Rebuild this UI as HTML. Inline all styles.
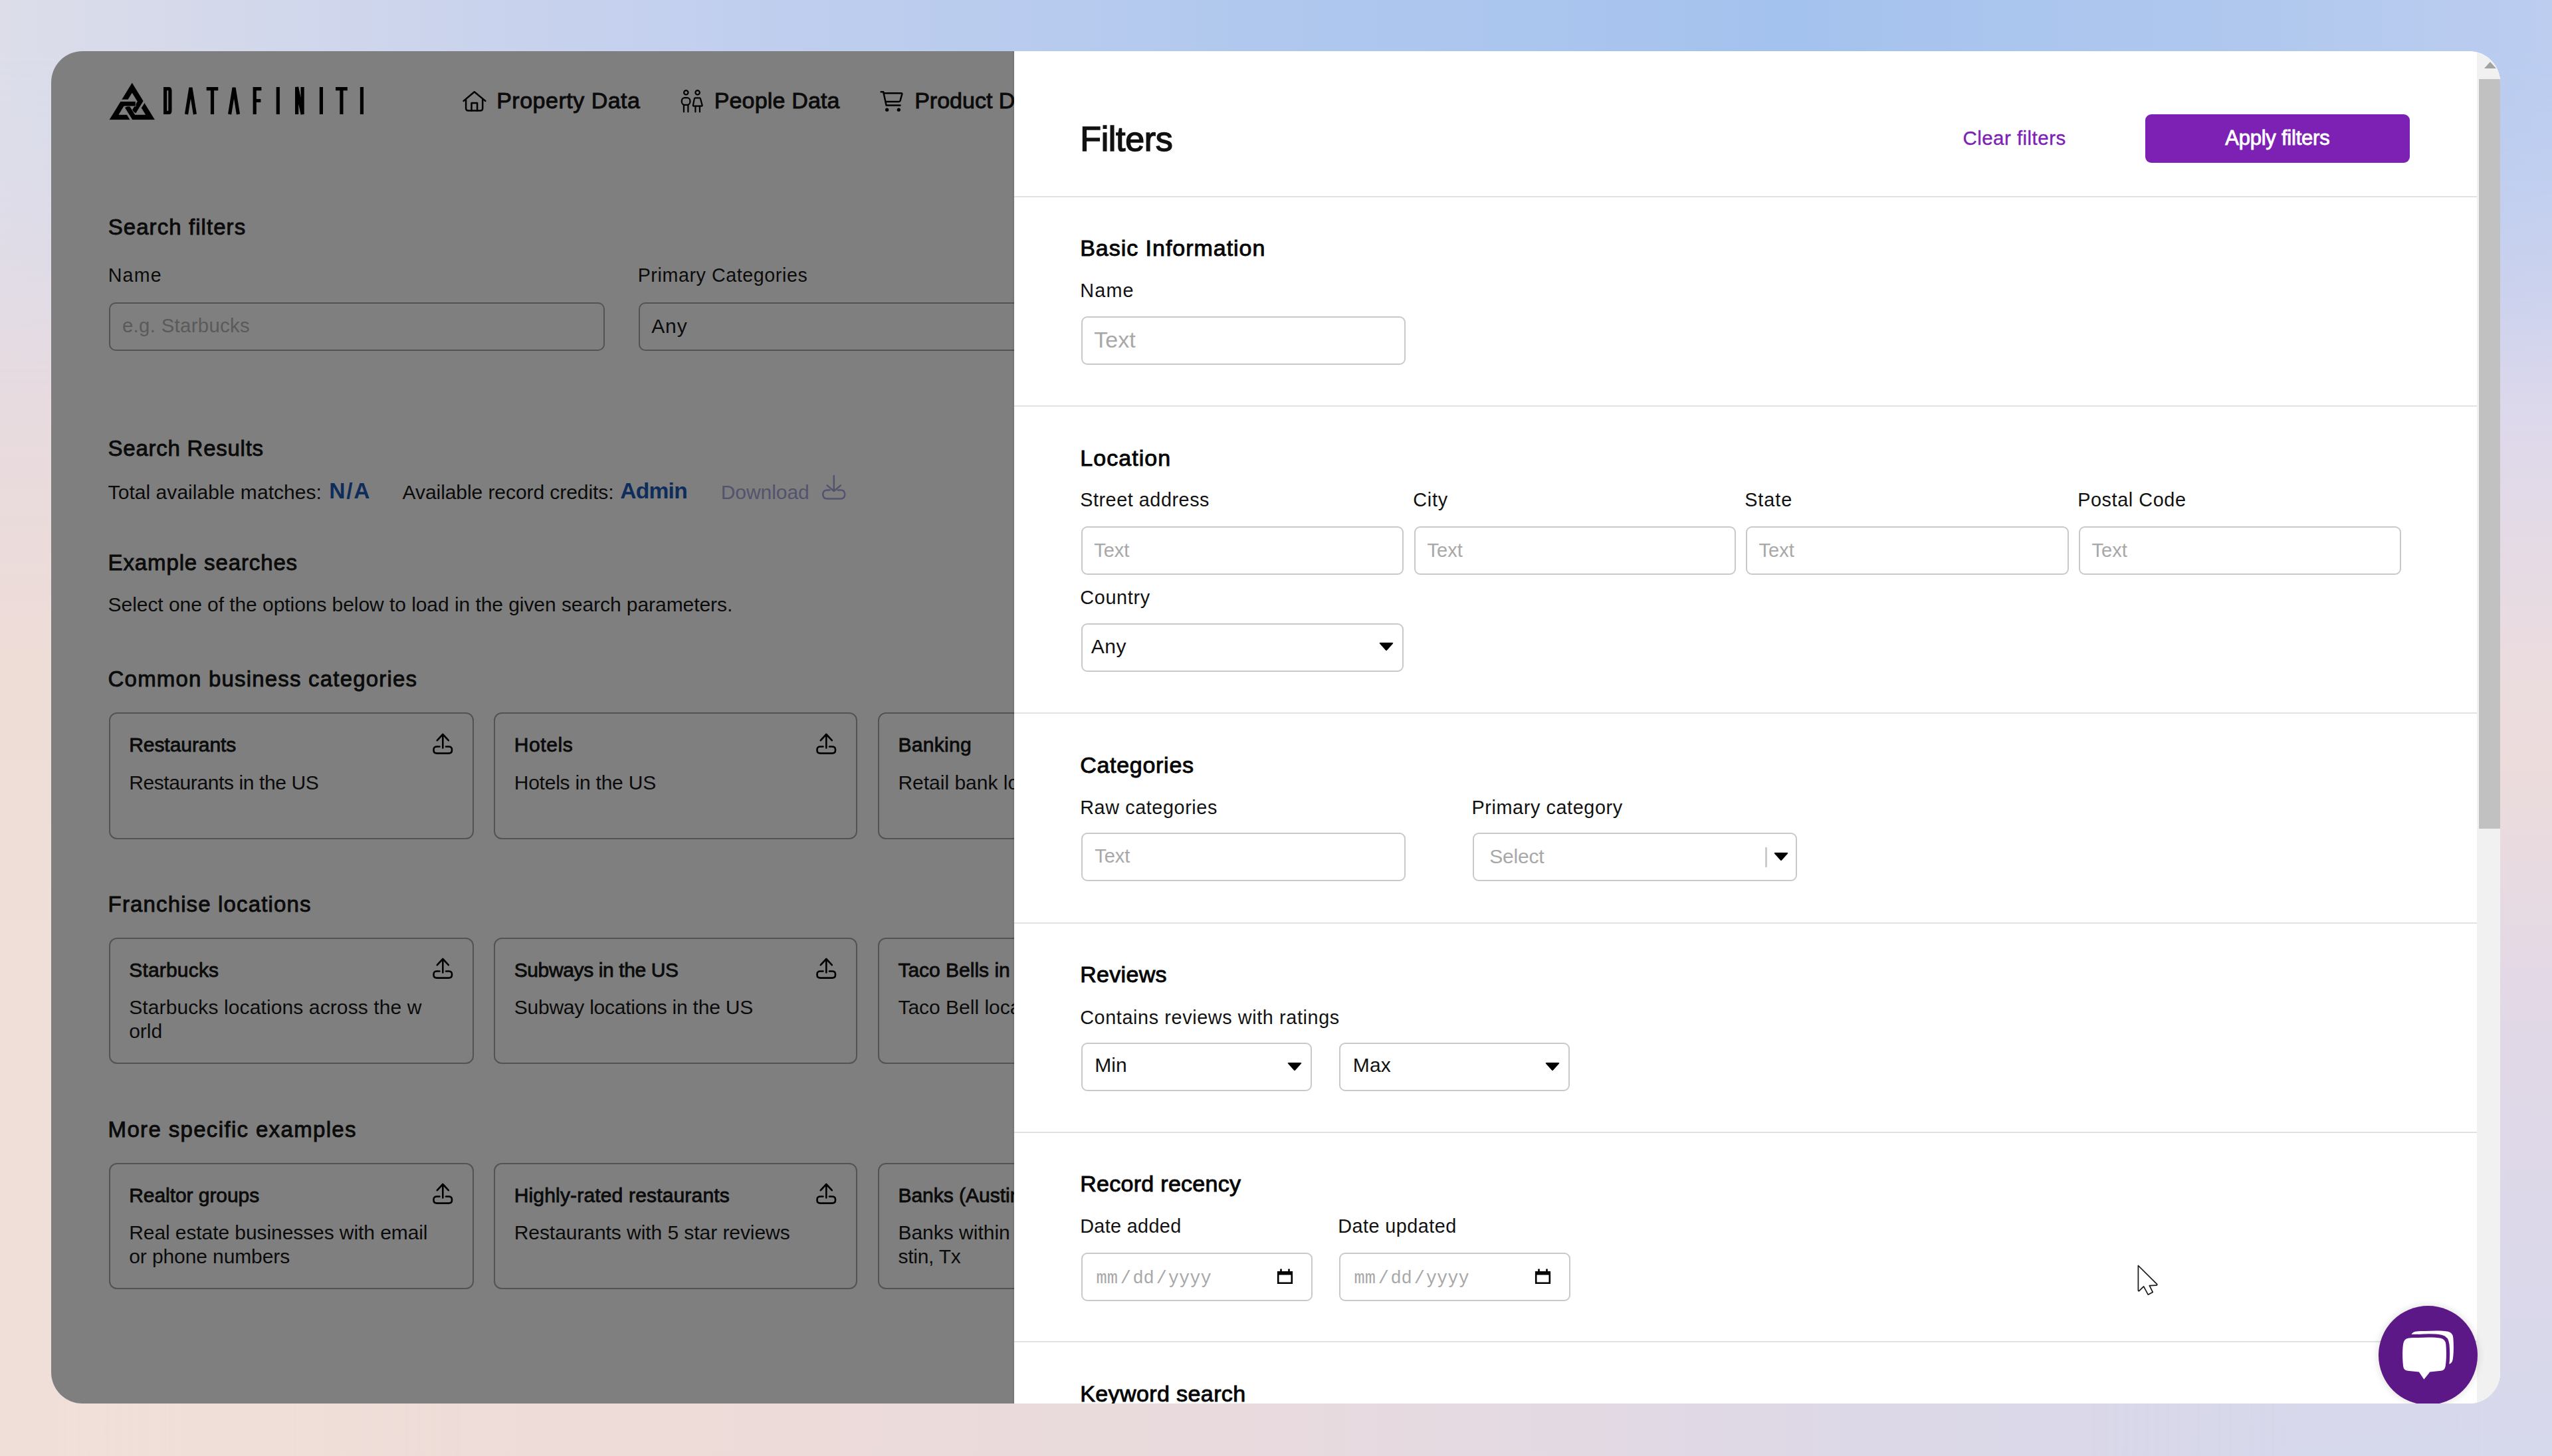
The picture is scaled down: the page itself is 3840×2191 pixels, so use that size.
<!DOCTYPE html>
<html><head><meta charset="utf-8">
<style>
*{margin:0;padding:0;box-sizing:border-box}
html,body{width:3840px;height:2191px;overflow:hidden}
body{position:relative;font-family:"Liberation Sans",sans-serif;color:#212121;background:linear-gradient(90deg,#f0dfd9 0%,#eedcd8 25%,#e8dade 50%,#dcd8e8 75%,#d4d8ec 100%)}
.bgl{position:absolute;left:0;top:0;width:3840px;height:2191px}
#bgL{background:linear-gradient(180deg,#d8dcec 0%,#e6dbe2 23%,#eedcd7 45%,#f0dfd8 70%,#f0dfd9 100%);-webkit-mask-image:linear-gradient(90deg,#000 0px,#000 80px,transparent 700px)}
#bgR{background:linear-gradient(180deg,#b8cbee 0%,#cdd3ee 13.7%,#dcd8ec 27.4%,#ebdcdf 45.6%,#ecdcdc 52.5%,#e2d8e6 68.5%,#d6d8ec 100%);-webkit-mask-image:linear-gradient(270deg,#000 0px,#000 80px,transparent 700px)}
#bgT{background:linear-gradient(90deg,#dcdde9 0%,#c4d0ee 25%,#b0c8ee 50%,#a4c2ee 70%,#b0c8ee 88%,#bccdf0 100%);-webkit-mask-image:linear-gradient(180deg,#000 0px,#000 80px,transparent 600px)}
.t{position:absolute;white-space:nowrap}
.b{position:absolute}
#card{position:absolute;left:0;top:0;width:3840px;height:2191px;clip-path:inset(77px 78px 79px 77px round 47px);}
#pg{position:absolute;left:0;top:0;width:3840px;height:2191px;background:#fff;color:#161616}
#ov{position:absolute;left:0;top:0;width:1526px;height:2191px;background:rgba(0,0,0,0.5)}
#panel{position:absolute;left:1526px;top:0;width:2314px;height:2191px;background:#fff}
#pc{position:absolute;left:-1526px;top:0;width:3840px;height:2191px}
</style></head><body>
<div class="bgl" id="bgL"></div><div class="bgl" id="bgR"></div><div class="bgl" id="bgT"></div>
<div id="card">
 <div id="pg"><svg class="b" style="left:163.5px;top:123.5px;width:69.5px;height:56.5px;overflow:visible" viewBox="0 0 1 0.866" preserveAspectRatio="none"><polygon points="0.2691,0.4000 0.5000,0.0000 0.7483,0.4300 0.5833,0.7158 0.4837,0.6583 0.6097,0.4400 0.5000,0.2500 0.4134,0.4000" fill="#000" stroke="#fff" stroke-width="0.012"/><polygon points="0.7691,0.4660 1.0000,0.8660 0.5035,0.8660 0.3385,0.5802 0.4381,0.5227 0.5641,0.7410 0.7835,0.7410 0.6969,0.5910" fill="#000" stroke="#fff" stroke-width="0.012"/><polygon points="0.4619,0.8660 0.0000,0.8660 0.2483,0.4360 0.5783,0.4360 0.5783,0.5510 0.3262,0.5510 0.2165,0.7410 0.3897,0.7410" fill="#000" stroke="#fff" stroke-width="0.012"/></svg><svg class="b" style="left:0;top:0;width:700px;height:300px" viewBox="0 0 700 300"><path d="M248.6 133.6 H254.5 Q255.9 133.6 255.9 137 V166 Q255.9 169.4 254.5 169.4 H248.6 Z" fill="none" stroke="#000" stroke-width="5.2"/><path d="M280.5 172 L286.95 132 L293.4 172" fill="none" stroke="#000" stroke-width="5.2"/><path d="M310.7 133.6 H328.3 M319.5 131 V172" fill="none" stroke="#000" stroke-width="5.2"/><path d="M345.6 172 L352.05 132 L358.5 172" fill="none" stroke="#000" stroke-width="5.2"/><path d="M383.20000000000005 172 V133.6 H393.4 M383.20000000000005 151.5 H392.4" fill="none" stroke="#000" stroke-width="5.2"/><path d="M418.29999999999995 131 V172" fill="none" stroke="#000" stroke-width="5.2"/><path d="M446.6 172 V131 L455.09999999999997 172 V131" fill="none" stroke="#000" stroke-width="5.2"/><path d="M483.4 131 V172" fill="none" stroke="#000" stroke-width="5.2"/><path d="M505 133.6 H522.8 M513.9 131 V172" fill="none" stroke="#000" stroke-width="5.2"/><path d="M544.45 131 V172" fill="none" stroke="#000" stroke-width="5.2"/></svg><svg class="b" style="left:696px;top:136px;width:36px;height:34px" viewBox="0 0 36 34"><g fill="none" stroke="#000" stroke-width="2.5" stroke-linejoin="round" stroke-linecap="round"><path d="M1.6 15.9 L17.8 2.2 L34.3 15.9"/><path d="M5.1 13.5 V27 Q5.1 30.5 8.6 30.5 H26.7 Q30.2 30.5 30.2 27 V13.5"/><path d="M13.5 30.5 V18.9 H22.1 V30.5"/></g></svg><div class="t" style="left:747.2px;top:136.1px;font-size:34px;line-height:30.8px;height:30.8px;letter-spacing:0.50px;-webkit-text-stroke:0.95px currentColor;color:#161616">Property Data</div><svg class="b" style="left:1015px;top:130px;width:50px;height:45px" viewBox="0 0 50 45"><g fill="none" stroke="#000" stroke-width="2.2" stroke-linejoin="round" stroke-linecap="round"><circle cx="17.3" cy="9.3" r="3.2"/><circle cx="34.6" cy="9.3" r="3.2"/><rect x="10.8" y="17.2" width="12.6" height="10.6" rx="4.5"/><path d="M13.9 27.8 V38.3 M20.4 27.8 V38.3"/><path d="M31.2 17.4 H37.6 Q38.6 17.4 39 18.6 L41.6 28.2 Q41.9 29.7 40.4 29.7 H29 Q27.6 29.7 27.9 28.2 L29.8 18.6 Q30.2 17.4 31.2 17.4 Z"/><path d="M31.4 29.7 V38.3 M37.9 29.7 V38.3"/></g></svg><div class="t" style="left:1074.7px;top:136.1px;font-size:34px;line-height:30.8px;height:30.8px;letter-spacing:0.17px;-webkit-text-stroke:0.95px currentColor;color:#161616">People Data</div><svg class="b" style="left:1318px;top:130px;width:50px;height:45px" viewBox="0 0 50 45"><g fill="none" stroke="#000" stroke-width="2.5" stroke-linejoin="round" stroke-linecap="round"><path d="M7.7 8.3 H11.2 L15.6 28.6 H36.5"/><path d="M12.3 10.3 H38.2 Q39.6 10.3 39.3 11.6 L36.5 21.7 Q36.1 22.9 34.9 22.9 H14.6"/></g><circle cx="16.7" cy="35.2" r="2.6" fill="#000"/><circle cx="34.3" cy="35.2" r="2.6" fill="#000"/></svg><div class="t" style="left:1376.2px;top:136.1px;font-size:34px;line-height:30.8px;height:30.8px;-webkit-text-stroke:0.95px currentColor;color:#161616">Product Data</div><div class="t" style="left:162.7px;top:327.2px;font-size:33px;line-height:29.9px;height:29.9px;letter-spacing:1.07px;-webkit-text-stroke:0.92px currentColor">Search filters</div><div class="t" style="left:162.7px;top:402.3px;font-size:28.6px;line-height:25.9px;height:25.9px;letter-spacing:1.21px">Name</div><div class="b" style="left:163.8px;top:454.5px;width:745.9px;height:73.0px;border:2.5px solid #a6a6a6;border-radius:10px"></div><div class="t" style="left:183.9px;top:476.9px;font-size:29.3px;line-height:26.5px;height:26.5px;letter-spacing:0.35px;color:#b5b5b5">e.g. Starbucks</div><div class="t" style="left:959.7px;top:402.3px;font-size:28.6px;line-height:25.9px;height:25.9px;letter-spacing:0.61px">Primary Categories</div><div class="b" style="left:960.5px;top:454.5px;width:739.5px;height:73.0px;border:2.5px solid #a6a6a6;border-radius:10px"></div><div class="t" style="left:980.2px;top:477.2px;font-size:30px;line-height:27.2px;height:27.2px;letter-spacing:0.88px">Any</div><div class="t" style="left:162.6px;top:659.6px;font-size:33px;line-height:29.9px;height:29.9px;letter-spacing:0.75px;-webkit-text-stroke:0.92px currentColor">Search Results</div><div class="t" style="left:162.6px;top:727.4px;font-size:30px;line-height:27.2px;height:27.2px;letter-spacing:0.05px">Total available matches:</div><div class="t" style="left:495.2px;top:723.5px;font-size:33.6px;line-height:30.4px;height:30.4px;letter-spacing:1.75px;font-weight:bold;color:#1c5ab4">N/A</div><div class="t" style="left:605.6px;top:727.4px;font-size:30px;line-height:27.2px;height:27.2px;letter-spacing:-0.07px">Available record credits:</div><div class="t" style="left:933.2px;top:723.5px;font-size:33.6px;line-height:30.4px;height:30.4px;letter-spacing:-0.75px;font-weight:bold;color:#1c5ab4">Admin</div><div class="t" style="left:1084.7px;top:727.4px;font-size:30px;line-height:27.2px;height:27.2px;letter-spacing:-0.05px;color:#a6a6dc">Download</div><svg class="b" style="left:1236px;top:714px;width:38px;height:40px" viewBox="0 0 38 40"><g fill="none" stroke="#a6a6dc" stroke-width="2.5" stroke-linecap="round" stroke-linejoin="round"><path d="M18.8 2 V25 M8.6 16.4 L18.8 25 L29 16.4"/><path d="M12.5 23.4 H8.8 Q2.3 23.4 2.3 29.9 Q2.3 36.4 8.8 36.4 H28.7 Q35.2 36.4 35.2 29.9 Q35.2 23.4 28.7 23.4 H24.5"/></g></svg><div class="t" style="left:162.6px;top:832.2px;font-size:33px;line-height:29.9px;height:29.9px;letter-spacing:0.87px;-webkit-text-stroke:0.92px currentColor">Example searches</div><div class="t" style="left:162.6px;top:896.3px;font-size:30px;line-height:27.2px;height:27.2px;letter-spacing:-0.06px">Select one of the options below to load in the given search parameters.</div><div class="t" style="left:162.6px;top:1007.1px;font-size:33px;line-height:29.9px;height:29.9px;letter-spacing:1.19px;-webkit-text-stroke:0.92px currentColor">Common business categories</div><div class="t" style="left:162.6px;top:1345.6px;font-size:33px;line-height:29.9px;height:29.9px;letter-spacing:1.14px;-webkit-text-stroke:0.92px currentColor">Franchise locations</div><div class="t" style="left:162.6px;top:1685.3px;font-size:33px;line-height:29.9px;height:29.9px;letter-spacing:1.34px;-webkit-text-stroke:0.92px currentColor">More specific examples</div><div class="b" style="left:163.8px;top:1072.3px;width:548.8px;height:190.5px;border:2.5px solid #a6a6a6;border-radius:12px"></div><div class="t" style="left:194.2px;top:1107.3px;font-size:30px;line-height:27.2px;height:27.2px;letter-spacing:-0.06px;-webkit-text-stroke:0.84px currentColor">Restaurants</div><div class="t" style="left:194.2px;top:1163.6px;font-size:30px;line-height:27.2px;height:27.2px;letter-spacing:-0.40px">Restaurants in the US</div><svg class="b" style="left:650.0px;top:1102.0px;width:34px;height:34px" viewBox="0 0 34 34"><g fill="none" stroke="#000" stroke-width="2.6" stroke-linecap="round" stroke-linejoin="round"><path d="M16.3 3.5 V23.5 M7.8 12.2 L16.3 3 L24.8 12.2"/><path d="M11.5 21.5 H7.5 Q2.5 21.5 2.5 26 V27 Q2.5 31.6 7.5 31.6 H25 Q30 31.6 30 27 V26 Q30 21.5 25 21.5 H21"/></g></svg><div class="b" style="left:743.3px;top:1072.3px;width:546.7px;height:190.5px;border:2.5px solid #a6a6a6;border-radius:12px"></div><div class="t" style="left:773.7px;top:1107.3px;font-size:30px;line-height:27.2px;height:27.2px;letter-spacing:0.63px;-webkit-text-stroke:0.84px currentColor">Hotels</div><div class="t" style="left:773.7px;top:1163.6px;font-size:30px;line-height:27.2px;height:27.2px;letter-spacing:-0.22px">Hotels in the US</div><svg class="b" style="left:1227.4px;top:1102.0px;width:34px;height:34px" viewBox="0 0 34 34"><g fill="none" stroke="#000" stroke-width="2.6" stroke-linecap="round" stroke-linejoin="round"><path d="M16.3 3.5 V23.5 M7.8 12.2 L16.3 3 L24.8 12.2"/><path d="M11.5 21.5 H7.5 Q2.5 21.5 2.5 26 V27 Q2.5 31.6 7.5 31.6 H25 Q30 31.6 30 27 V26 Q30 21.5 25 21.5 H21"/></g></svg><div class="b" style="left:1321.0px;top:1072.3px;width:548.0px;height:190.5px;border:2.5px solid #a6a6a6;border-radius:12px"></div><div class="t" style="left:1351.4px;top:1107.3px;font-size:30px;line-height:27.2px;height:27.2px;letter-spacing:0.31px;-webkit-text-stroke:0.84px currentColor">Banking</div><div class="t" style="left:1351.4px;top:1163.6px;font-size:30px;line-height:27.2px;height:27.2px">Retail bank locations</div><div class="b" style="left:163.8px;top:1410.5px;width:548.8px;height:190.5px;border:2.5px solid #a6a6a6;border-radius:12px"></div><div class="t" style="left:194.2px;top:1445.5px;font-size:30px;line-height:27.2px;height:27.2px;letter-spacing:0.19px;-webkit-text-stroke:0.84px currentColor">Starbucks</div><div class="t" style="left:194.2px;top:1501.8px;font-size:30px;line-height:27.2px;height:27.2px;letter-spacing:0.11px">Starbucks locations across the w</div><div class="t" style="left:194.2px;top:1537.8px;font-size:30px;line-height:27.2px;height:27.2px">orld</div><svg class="b" style="left:650.0px;top:1440.2px;width:34px;height:34px" viewBox="0 0 34 34"><g fill="none" stroke="#000" stroke-width="2.6" stroke-linecap="round" stroke-linejoin="round"><path d="M16.3 3.5 V23.5 M7.8 12.2 L16.3 3 L24.8 12.2"/><path d="M11.5 21.5 H7.5 Q2.5 21.5 2.5 26 V27 Q2.5 31.6 7.5 31.6 H25 Q30 31.6 30 27 V26 Q30 21.5 25 21.5 H21"/></g></svg><div class="b" style="left:743.3px;top:1410.5px;width:546.7px;height:190.5px;border:2.5px solid #a6a6a6;border-radius:12px"></div><div class="t" style="left:773.7px;top:1445.5px;font-size:30px;line-height:27.2px;height:27.2px;letter-spacing:-0.38px;-webkit-text-stroke:0.84px currentColor">Subways in the US</div><div class="t" style="left:773.7px;top:1501.8px;font-size:30px;line-height:27.2px;height:27.2px;letter-spacing:-0.23px">Subway locations in the US</div><svg class="b" style="left:1227.4px;top:1440.2px;width:34px;height:34px" viewBox="0 0 34 34"><g fill="none" stroke="#000" stroke-width="2.6" stroke-linecap="round" stroke-linejoin="round"><path d="M16.3 3.5 V23.5 M7.8 12.2 L16.3 3 L24.8 12.2"/><path d="M11.5 21.5 H7.5 Q2.5 21.5 2.5 26 V27 Q2.5 31.6 7.5 31.6 H25 Q30 31.6 30 27 V26 Q30 21.5 25 21.5 H21"/></g></svg><div class="b" style="left:1321.0px;top:1410.5px;width:548.0px;height:190.5px;border:2.5px solid #a6a6a6;border-radius:12px"></div><div class="t" style="left:1351.4px;top:1445.5px;font-size:30px;line-height:27.2px;height:27.2px;-webkit-text-stroke:0.84px currentColor">Taco Bells in the US</div><div class="t" style="left:1351.4px;top:1501.8px;font-size:30px;line-height:27.2px;height:27.2px">Taco Bell locations</div><div class="b" style="left:163.8px;top:1749.6px;width:548.8px;height:190.5px;border:2.5px solid #a6a6a6;border-radius:12px"></div><div class="t" style="left:194.2px;top:1784.6px;font-size:30px;line-height:27.2px;height:27.2px;letter-spacing:-0.06px;-webkit-text-stroke:0.84px currentColor">Realtor groups</div><div class="t" style="left:194.2px;top:1840.9px;font-size:30px;line-height:27.2px;height:27.2px;letter-spacing:-0.08px">Real estate businesses with email</div><div class="t" style="left:194.2px;top:1876.9px;font-size:30px;line-height:27.2px;height:27.2px;letter-spacing:-0.10px">or phone numbers</div><svg class="b" style="left:650.0px;top:1779.3px;width:34px;height:34px" viewBox="0 0 34 34"><g fill="none" stroke="#000" stroke-width="2.6" stroke-linecap="round" stroke-linejoin="round"><path d="M16.3 3.5 V23.5 M7.8 12.2 L16.3 3 L24.8 12.2"/><path d="M11.5 21.5 H7.5 Q2.5 21.5 2.5 26 V27 Q2.5 31.6 7.5 31.6 H25 Q30 31.6 30 27 V26 Q30 21.5 25 21.5 H21"/></g></svg><div class="b" style="left:743.3px;top:1749.6px;width:546.7px;height:190.5px;border:2.5px solid #a6a6a6;border-radius:12px"></div><div class="t" style="left:773.7px;top:1784.6px;font-size:30px;line-height:27.2px;height:27.2px;letter-spacing:0.17px;-webkit-text-stroke:0.84px currentColor">Highly-rated restaurants</div><div class="t" style="left:773.7px;top:1840.9px;font-size:30px;line-height:27.2px;height:27.2px;letter-spacing:-0.06px">Restaurants with 5 star reviews</div><svg class="b" style="left:1227.4px;top:1779.3px;width:34px;height:34px" viewBox="0 0 34 34"><g fill="none" stroke="#000" stroke-width="2.6" stroke-linecap="round" stroke-linejoin="round"><path d="M16.3 3.5 V23.5 M7.8 12.2 L16.3 3 L24.8 12.2"/><path d="M11.5 21.5 H7.5 Q2.5 21.5 2.5 26 V27 Q2.5 31.6 7.5 31.6 H25 Q30 31.6 30 27 V26 Q30 21.5 25 21.5 H21"/></g></svg><div class="b" style="left:1321.0px;top:1749.6px;width:548.0px;height:190.5px;border:2.5px solid #a6a6a6;border-radius:12px"></div><div class="t" style="left:1351.4px;top:1784.6px;font-size:30px;line-height:27.2px;height:27.2px;-webkit-text-stroke:0.84px currentColor">Banks (Austin, Tx)</div><div class="t" style="left:1351.4px;top:1840.9px;font-size:30px;line-height:27.2px;height:27.2px">Banks within Au</div><div class="t" style="left:1351.4px;top:1876.9px;font-size:30px;line-height:27.2px;height:27.2px;letter-spacing:-0.24px">stin, Tx</div></div>
 <div id="ov"></div><div class="b" style="left:1522px;top:0;width:4px;height:2191px;background:linear-gradient(90deg,rgba(0,0,0,0),rgba(0,0,0,0.08))"></div>
 <div id="panel"><div id="pc"><div class="t" style="left:1625.2px;top:185.5px;font-size:52px;line-height:47.1px;height:47.1px;letter-spacing:-0.32px;-webkit-text-stroke:1.46px currentColor;color:#111">Filters</div><div class="t" style="left:2953.4px;top:195.2px;font-size:29.5px;line-height:26.7px;height:26.7px;letter-spacing:0.47px;-webkit-text-stroke:0.35px currentColor;color:#7d21b4">Clear filters</div><div class="b" style="left:3228.0px;top:171.7px;width:398.0px;height:73.6px;background:#7d21b4;border-radius:9px"></div><div class="t" style="left:3348.2px;top:194.0px;font-size:31px;line-height:28.1px;height:28.1px;letter-spacing:-0.23px;-webkit-text-stroke:0.87px currentColor;color:#fff">Apply filters</div><div class="b" style="left:1526.0px;top:294.5px;width:2201.0px;height:2.0px;background:#e2e2e2"></div><div class="b" style="left:1526.0px;top:610.0px;width:2201.0px;height:2.0px;background:#e2e2e2"></div><div class="b" style="left:1526.0px;top:1071.8px;width:2201.0px;height:2.0px;background:#e2e2e2"></div><div class="b" style="left:1526.0px;top:1387.5px;width:2201.0px;height:2.0px;background:#e2e2e2"></div><div class="b" style="left:1526.0px;top:1703.0px;width:2201.0px;height:2.0px;background:#e2e2e2"></div><div class="b" style="left:1526.0px;top:2018.0px;width:2201.0px;height:2.0px;background:#e2e2e2"></div><div class="t" style="left:1625.2px;top:358.4px;font-size:34px;line-height:30.8px;height:30.8px;letter-spacing:0.97px;-webkit-text-stroke:0.95px currentColor;color:#060606">Basic Information</div><div class="t" style="left:1625.2px;top:423.7px;font-size:28.8px;line-height:26.1px;height:26.1px;letter-spacing:1.20px;color:#121212">Name</div><div class="b" style="left:1626.6px;top:475.5px;width:488.4px;height:73.5px;border:2px solid #c9c9c9;border-radius:9px;background:#fff"></div><div class="t" style="left:1646.2px;top:496.4px;font-size:34px;line-height:30.8px;height:30.8px;letter-spacing:0.04px;color:#a8a8a8">Text</div><div class="t" style="left:1625.2px;top:674.1px;font-size:34px;line-height:30.8px;height:30.8px;letter-spacing:1.07px;-webkit-text-stroke:0.95px currentColor;color:#060606">Location</div><div class="t" style="left:1625.2px;top:739.4px;font-size:28.8px;line-height:26.1px;height:26.1px;letter-spacing:0.54px;color:#121212">Street address</div><div class="b" style="left:1626.6px;top:791.6px;width:485.4px;height:73.4px;border:2px solid #c9c9c9;border-radius:9px;background:#fff"></div><div class="t" style="left:1646.2px;top:814.5px;font-size:29px;line-height:26.2px;height:26.2px;color:#a8a8a8">Text</div><div class="t" style="left:2126.2px;top:739.4px;font-size:28.8px;line-height:26.1px;height:26.1px;letter-spacing:0.79px;color:#121212">City</div><div class="b" style="left:2128.0px;top:791.6px;width:484.0px;height:73.4px;border:2px solid #c9c9c9;border-radius:9px;background:#fff"></div><div class="t" style="left:2147.6px;top:814.5px;font-size:29px;line-height:26.2px;height:26.2px;color:#a8a8a8">Text</div><div class="t" style="left:2625.2px;top:739.4px;font-size:28.8px;line-height:26.1px;height:26.1px;letter-spacing:0.94px;color:#121212">State</div><div class="b" style="left:2627.0px;top:791.6px;width:486.0px;height:73.4px;border:2px solid #c9c9c9;border-radius:9px;background:#fff"></div><div class="t" style="left:2646.6px;top:814.5px;font-size:29px;line-height:26.2px;height:26.2px;color:#a8a8a8">Text</div><div class="t" style="left:3126.2px;top:739.4px;font-size:28.8px;line-height:26.1px;height:26.1px;letter-spacing:0.59px;color:#121212">Postal Code</div><div class="b" style="left:3128.0px;top:791.6px;width:485.0px;height:73.4px;border:2px solid #c9c9c9;border-radius:9px;background:#fff"></div><div class="t" style="left:3147.6px;top:814.5px;font-size:29px;line-height:26.2px;height:26.2px;color:#a8a8a8">Text</div><div class="t" style="left:1625.2px;top:886.0px;font-size:28.8px;line-height:26.1px;height:26.1px;letter-spacing:0.70px;color:#121212">Country</div><div class="b" style="left:1626.6px;top:938.0px;width:485.4px;height:72.7px;border:2px solid #c9c9c9;border-radius:9px;background:#fff"></div><div class="t" style="left:1641.7px;top:959.0px;font-size:30px;line-height:27.2px;height:27.2px;letter-spacing:0.52px;color:#121212">Any</div><svg class="b" style="left:2074.5px;top:967.0px;width:22px;height:13px" viewBox="0 0 22 13"><path d="M1 1.5 Q0 0 2 0 H20 Q22 0 21 1.5 L12 11.5 Q11 12.7 10 11.5 Z" fill="#000"/></svg><div class="t" style="left:1625.2px;top:1136.0px;font-size:34px;line-height:30.8px;height:30.8px;letter-spacing:0.71px;-webkit-text-stroke:0.95px currentColor;color:#060606">Categories</div><div class="t" style="left:1625.2px;top:1201.8px;font-size:28.8px;line-height:26.1px;height:26.1px;letter-spacing:0.59px;color:#121212">Raw categories</div><div class="t" style="left:2214.5px;top:1201.8px;font-size:28.8px;line-height:26.1px;height:26.1px;letter-spacing:0.60px;color:#121212">Primary category</div><div class="b" style="left:1626.6px;top:1253.0px;width:488.4px;height:73.4px;border:2px solid #c9c9c9;border-radius:9px;background:#fff"></div><div class="t" style="left:1647.2px;top:1275.4px;font-size:29px;line-height:26.2px;height:26.2px;color:#a8a8a8">Text</div><div class="b" style="left:2216.0px;top:1253.0px;width:488.0px;height:73.4px;border:2px solid #c9c9c9;border-radius:9px;background:#fff"></div><div class="t" style="left:2241.2px;top:1274.6px;font-size:30px;line-height:27.2px;height:27.2px;letter-spacing:-0.18px;color:#a8a8a8">Select</div><div class="b" style="left:2656.0px;top:1275.0px;width:2.5px;height:30.0px;background:#ccc"></div><svg class="b" style="left:2669.0px;top:1283.0px;width:22px;height:13px" viewBox="0 0 22 13"><path d="M1 1.5 Q0 0 2 0 H20 Q22 0 21 1.5 L12 11.5 Q11 12.7 10 11.5 Z" fill="#000"/></svg><div class="t" style="left:1625.2px;top:1450.8px;font-size:34px;line-height:30.8px;height:30.8px;letter-spacing:0.31px;-webkit-text-stroke:0.95px currentColor;color:#060606">Reviews</div><div class="t" style="left:1625.2px;top:1517.8px;font-size:28.8px;line-height:26.1px;height:26.1px;letter-spacing:0.61px;color:#121212">Contains reviews with ratings</div><div class="b" style="left:1626.6px;top:1569.0px;width:347.0px;height:73.0px;border:2px solid #c9c9c9;border-radius:9px;background:#fff"></div><div class="t" style="left:1647.2px;top:1588.7px;font-size:30px;line-height:27.2px;height:27.2px;letter-spacing:0.10px;color:#121212">Min</div><svg class="b" style="left:1936.8px;top:1598.7px;width:22px;height:13px" viewBox="0 0 22 13"><path d="M1 1.5 Q0 0 2 0 H20 Q22 0 21 1.5 L12 11.5 Q11 12.7 10 11.5 Z" fill="#000"/></svg><div class="b" style="left:2015.0px;top:1569.0px;width:347.0px;height:73.0px;border:2px solid #c9c9c9;border-radius:9px;background:#fff"></div><div class="t" style="left:2035.8px;top:1588.7px;font-size:30px;line-height:27.2px;height:27.2px;letter-spacing:0.15px;color:#121212">Max</div><svg class="b" style="left:2324.7px;top:1598.7px;width:22px;height:13px" viewBox="0 0 22 13"><path d="M1 1.5 Q0 0 2 0 H20 Q22 0 21 1.5 L12 11.5 Q11 12.7 10 11.5 Z" fill="#000"/></svg><div class="t" style="left:1625.2px;top:1766.3px;font-size:34px;line-height:30.8px;height:30.8px;letter-spacing:0.29px;-webkit-text-stroke:0.95px currentColor;color:#060606">Record recency</div><div class="t" style="left:1625.2px;top:1831.6px;font-size:28.8px;line-height:26.1px;height:26.1px;letter-spacing:0.34px;color:#121212">Date added</div><div class="t" style="left:2013.2px;top:1831.6px;font-size:28.8px;line-height:26.1px;height:26.1px;letter-spacing:0.47px;color:#121212">Date updated</div><div class="b" style="left:1627.0px;top:1884.5px;width:347.6px;height:73.0px;border:2px solid #c9c9c9;border-radius:9px;background:#fff"></div><div class="t" style="left:1649.5px;top:1913.0px;font-family:'Liberation Mono',monospace;font-size:27px;line-height:22.4px;color:#a8a8a8">mm</div><div class="t" style="left:1685.8px;top:1913.0px;font-family:'Liberation Mono',monospace;font-size:27px;line-height:22.4px;color:#a8a8a8">/</div><div class="t" style="left:1704.4px;top:1913.0px;font-family:'Liberation Mono',monospace;font-size:27px;line-height:22.4px;color:#a8a8a8">dd</div><div class="t" style="left:1739.8px;top:1913.0px;font-family:'Liberation Mono',monospace;font-size:27px;line-height:22.4px;color:#a8a8a8">/</div><div class="t" style="left:1757.8px;top:1913.0px;font-family:'Liberation Mono',monospace;font-size:27px;line-height:22.4px;color:#a8a8a8">yyyy</div><svg class="b" style="left:1921.0px;top:1909px;width:25px;height:24px" viewBox="0 0 25 24"><path d="M2.2 5.5 H22.8 V21.8 H2.2 Z" fill="none" stroke="#000" stroke-width="2.6"/><path d="M1 4 H24 V9.5 H1 Z" fill="#000"/><path d="M6.5 0.5 V5 M18.5 0.5 V5" stroke="#000" stroke-width="2.6"/></svg><div class="b" style="left:2015.0px;top:1884.5px;width:347.5px;height:73.0px;border:2px solid #c9c9c9;border-radius:9px;background:#fff"></div><div class="t" style="left:2037.5px;top:1913.0px;font-family:'Liberation Mono',monospace;font-size:27px;line-height:22.4px;color:#a8a8a8">mm</div><div class="t" style="left:2073.8px;top:1913.0px;font-family:'Liberation Mono',monospace;font-size:27px;line-height:22.4px;color:#a8a8a8">/</div><div class="t" style="left:2092.4px;top:1913.0px;font-family:'Liberation Mono',monospace;font-size:27px;line-height:22.4px;color:#a8a8a8">dd</div><div class="t" style="left:2127.8px;top:1913.0px;font-family:'Liberation Mono',monospace;font-size:27px;line-height:22.4px;color:#a8a8a8">/</div><div class="t" style="left:2145.8px;top:1913.0px;font-family:'Liberation Mono',monospace;font-size:27px;line-height:22.4px;color:#a8a8a8">yyyy</div><svg class="b" style="left:2308.9px;top:1909px;width:25px;height:24px" viewBox="0 0 25 24"><path d="M2.2 5.5 H22.8 V21.8 H2.2 Z" fill="none" stroke="#000" stroke-width="2.6"/><path d="M1 4 H24 V9.5 H1 Z" fill="#000"/><path d="M6.5 0.5 V5 M18.5 0.5 V5" stroke="#000" stroke-width="2.6"/></svg><div class="t" style="left:1625.2px;top:2081.8px;font-size:34px;line-height:30.8px;height:30.8px;letter-spacing:0.40px;-webkit-text-stroke:0.95px currentColor;color:#060606">Keyword search</div><div class="b" style="left:3727.0px;top:77.0px;width:35.0px;height:2035.0px;background:#f1f1f1"></div><div class="b" style="left:3730.0px;top:119.0px;width:31.5px;height:1128.3px;background:#c1c1c1"></div><svg class="b" style="left:3736px;top:90px;width:22px;height:16px" viewBox="0 0 22 16"><path d="M2 13 L11 3 L20 13 Z" fill="#a3a3a3"/></svg><div class="b" style="left:3578.5px;top:1964.5px;width:149px;height:149px;border-radius:50%;background:#5c1886;box-shadow:0 0 12px rgba(0,0,0,0.15)"></div><svg class="b" style="left:3600px;top:1990px;width:110px;height:100px" viewBox="0 0 1602 1456"><path transform="translate(160,-145)" d="M560 335 C760 320 950 325 1060 345 Q1160 370 1170 480 C1185 650 1180 850 1160 960 Q1145 1050 1060 1060 L820 1085 L690 1250 L580 1085 L330 1060 Q245 1045 235 960 C215 800 215 600 235 470 Q250 365 340 345 C420 335 500 335 560 335 Z" fill="#fff"/><path d="M560 335 C760 320 950 325 1060 345 Q1160 370 1170 480 C1185 650 1180 850 1160 960 Q1145 1050 1060 1060 L820 1085 L690 1250 L580 1085 L330 1060 Q245 1045 235 960 C215 800 215 600 235 470 Q250 365 340 345 C420 335 500 335 560 335 Z" fill="#fff" stroke="#5c1886" stroke-width="150" paint-order="stroke"/></svg><svg class="b" style="left:3214px;top:1901px;width:36px;height:50px" viewBox="0 0 36 50"><path d="M3.4 3.5 V40.6 Q3.6 42.4 5.2 41.2 L11.6 34.8 L18.2 47.2 L25.2 43.4 L20.3 33.6 L30.8 33.2 Q32.6 32.6 31.3 31.2 Z" fill="#fff" stroke="#1a1a1a" stroke-width="1.7" stroke-linejoin="round"/></svg></div></div>
</div>
</body></html>
